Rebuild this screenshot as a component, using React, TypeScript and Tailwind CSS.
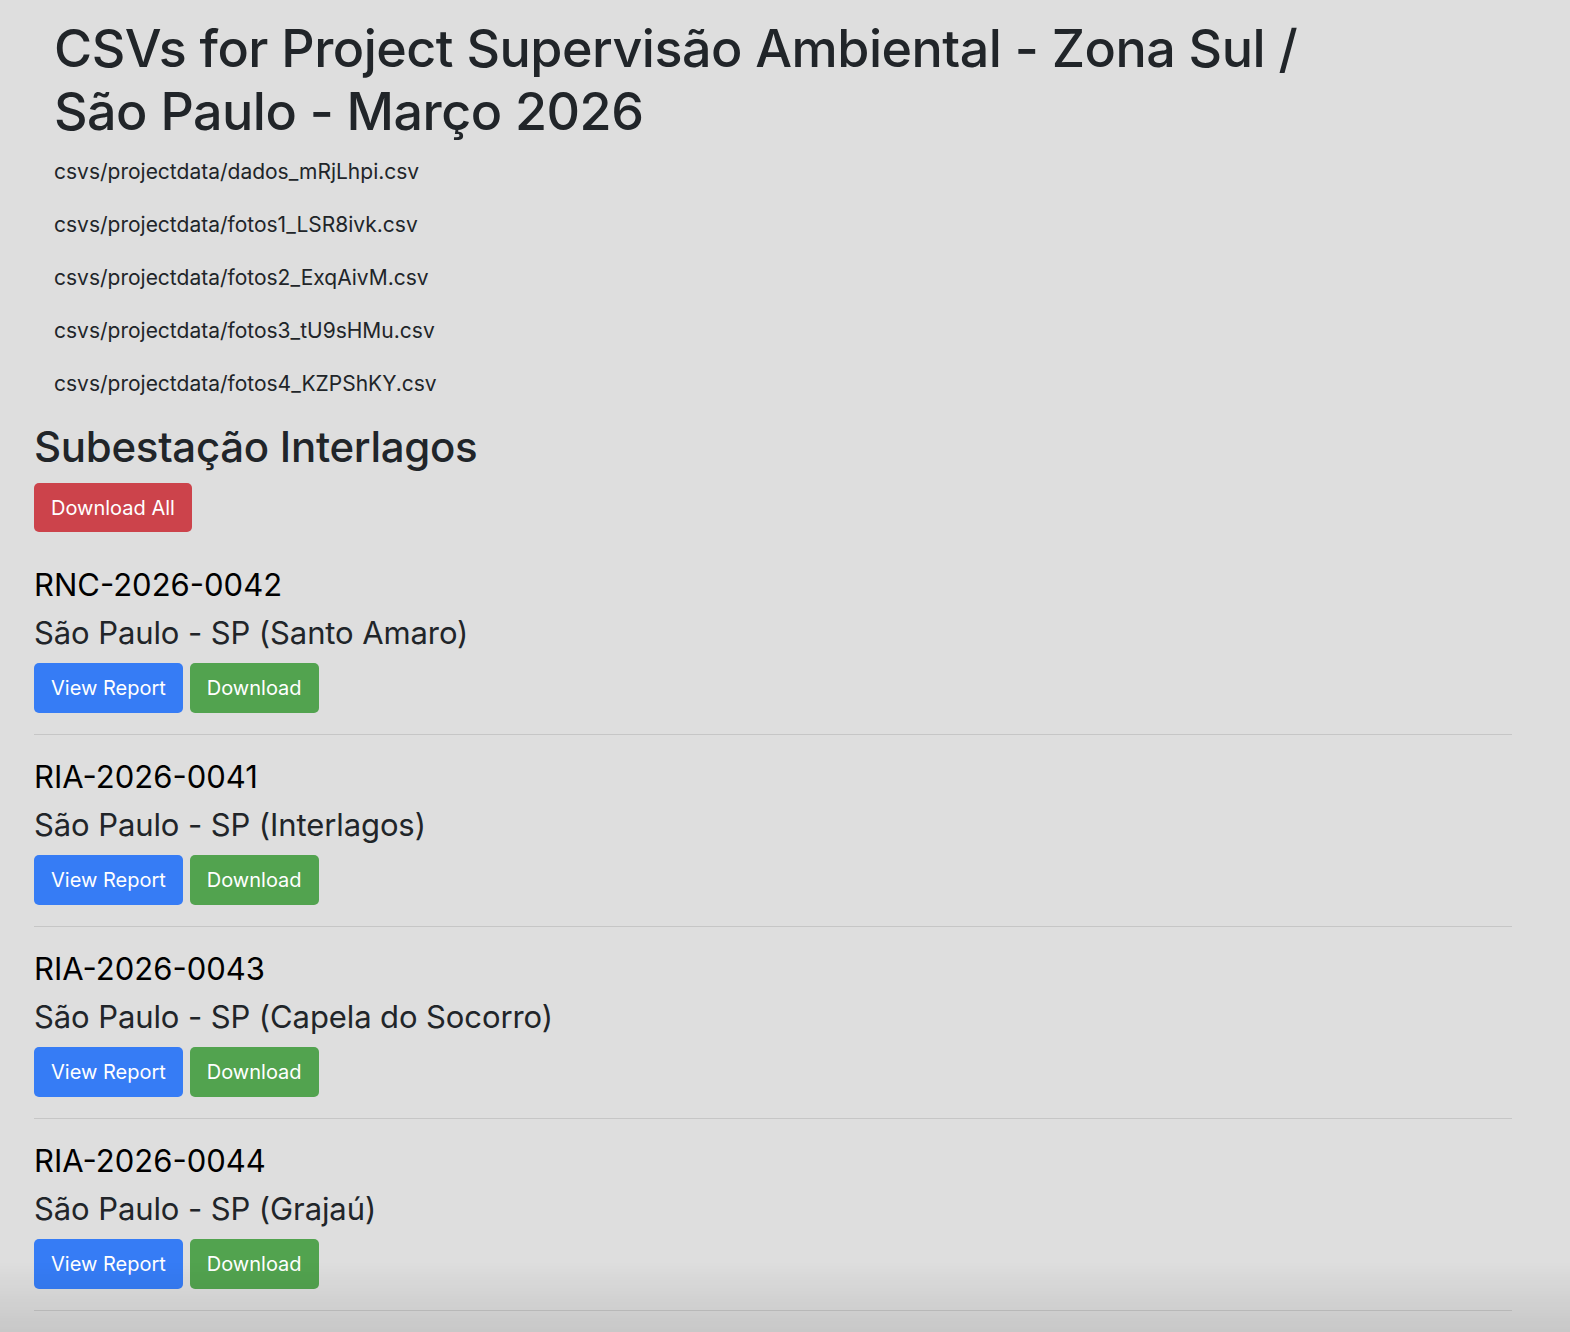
const files = [
    "csvs/projectdata/dados_mRjLhpi.csv",
    "csvs/projectdata/fotos1_LSR8ivk.csv",
    "csvs/projectdata/fotos2_ExqAivM.csv",
    "csvs/projectdata/fotos3_tU9sHMu.csv",
    "csvs/projectdata/fotos4_KZPShKY.csv",
];

const reports = [
    { code: "RNC-2026-0042", place: "São Paulo - SP (Santo Amaro)" },
    { code: "RIA-2026-0041", place: "São Paulo - SP (Interlagos)" },
    { code: "RIA-2026-0043", place: "São Paulo - SP (Capela do Socorro)" },
    { code: "RIA-2026-0044", place: "São Paulo - SP (Grajaú)" },
];

export default function App() {
    return (
        <div className="min-h-[1332px] bg-[#dedede] text-[#212529] font-['Inter','Noto_Sans',sans-serif]">
            <div className="px-[34px] pb-10">

                {/* Header */}
                <div className="pl-5 pt-[17px]">
                    <h1 className="text-[52px] leading-[63px] font-medium tracking-[-0.5px] max-w-[1300px]">
                        CSVs for Project Supervisão Ambiental - Zona Sul / São Paulo - Março 2026
                    </h1>
                    <div className="mt-[17px] flex flex-col gap-[29px]">
                        {files.map((f) => (
                            <p key={f} className="text-[21px] leading-6">{f}</p>
                        ))}
                    </div>
                </div>

                {/* Section */}
                <h2 className="mt-[25px] text-[42px] leading-[52px] font-medium tracking-[-0.3px]">Subestação Interlagos</h2>
                <button className="mt-[10px] h-[49px] px-[17px] rounded-[5px] bg-[#cc434b] text-white text-[20px]">
                    Download All
                </button>

                <div className="mt-[27px]">
                    {reports.map((r) => (
                        <div key={r.code} className="border-b border-[#c6c6c6] w-[1478px] pt-[8px] pb-[21px] mb-[16px]">
                            <div className="text-[31px] leading-[36px] text-black">{r.code}</div>
                            <div className="mt-[11px] text-[31px] leading-[38px] tracking-[-0.1px]">{r.place}</div>
                            <div className="mt-[11px] flex gap-[7px]">
                                <button className="h-[50px] px-[17px] rounded-[5px] bg-[#367cf5] text-white text-[20px]">View Report</button>
                                <button className="h-[50px] px-[17px] rounded-[5px] bg-[#52a34f] text-white text-[20px]">Download</button>
                            </div>
                        </div>
                    ))}
                </div>
            </div>

            {/* bottom shade */}
            <div className="pointer-events-none fixed inset-x-0 bottom-0 h-[70px] bg-gradient-to-b from-transparent to-black/10" />
        </div>
    );
}
